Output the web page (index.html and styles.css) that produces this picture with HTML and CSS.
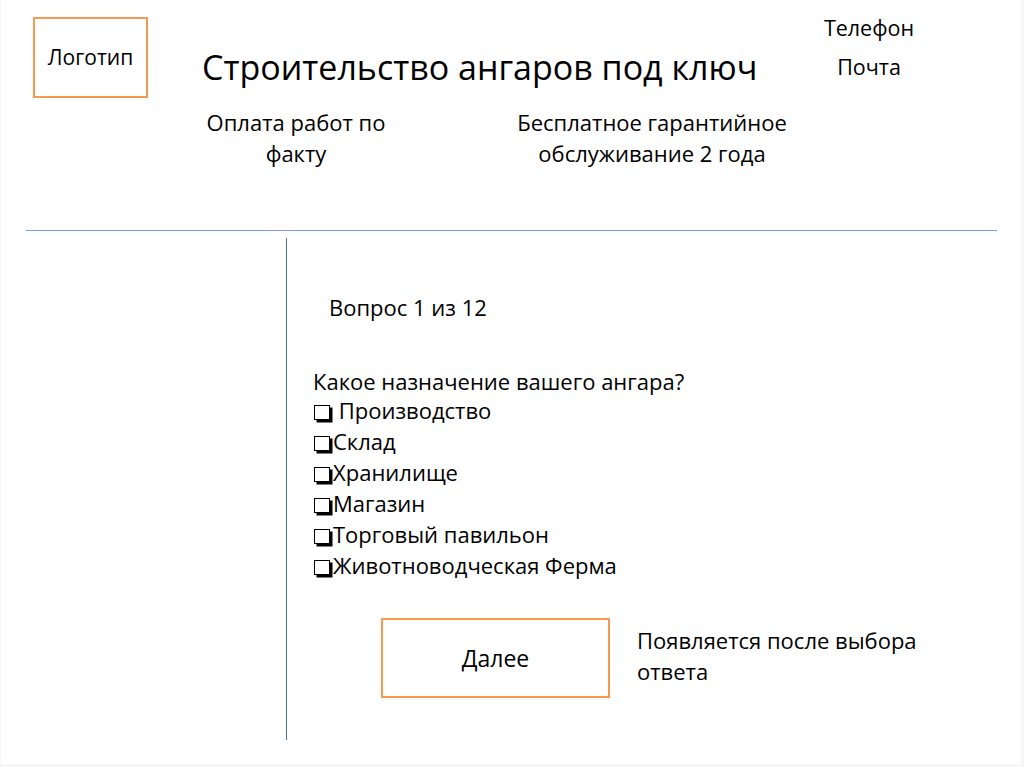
FILE: index.html
```html
<!DOCTYPE html>
<html lang="ru">
<head>
<meta charset="utf-8">
<title>Строительство ангаров под ключ</title>
<link rel="stylesheet" href="styles.css">
</head>
<body>
<div class="slide">
  <header class="top">
    <div class="row1">
      <div class="logo">Логотип</div>
      <h1 class="title">Строительство ангаров под ключ</h1>
      <div class="contacts"><div>Телефон</div><div>Почта</div></div>
    </div>
    <div class="row2">
      <p class="feature f1">Оплата работ по<br>факту</p>
      <p class="feature f2">Бесплатное гарантийное<br>обслуживание 2 года</p>
    </div>
  </header>
  <div class="hline"></div>
  <main class="body">
    <div class="left"></div>
    <section class="quiz">
      <p class="counter">Вопрос 1 из 12</p>
      <p class="question">Какое назначение вашего ангара?</p>
      <ul class="options">
        <li><span class="box"></span> Производство</li>
        <li><span class="box"></span>Склад</li>
        <li><span class="box"></span>Хранилище</li>
        <li><span class="box"></span>Магазин</li>
        <li><span class="box"></span>Торговый павильон</li>
        <li><span class="box"></span>Животноводческая Ферма</li>
      </ul>
      <div class="actions">
        <div class="next">Далее</div>
        <p class="note">Появляется после выбора<br>ответа</p>
      </div>
    </section>
  </main>
</div>
</body>
</html>
```

FILE: styles.css
```css
html, body {
  margin: 0;
  padding: 0;
}
body {
  background: #f6f6f6;
  font-family: "Open Sans", "Noto Sans", sans-serif;
  color: #000;
}
.slide {
  width: 1020px;
  height: 764px;
  margin-left: 1px;
  background: #fff;
  overflow: hidden;
}
.top {
  height: 230px;
}
.row1 {
  display: flex;
  align-items: flex-start;
  padding-left: 32px;
}
.logo {
  margin-top: 17px;
  width: 115px;
  height: 81px;
  box-sizing: border-box;
  border: 2.5px solid #f59a4f;
  display: flex;
  align-items: center;
  justify-content: center;
  font-size: 21px;
  padding-bottom: 2px;
}
.title {
  margin: 47px 0 0 54px;
  width: 607px;
  font-size: 34px;
  font-weight: 400;
  line-height: 40px;
}
.contacts {
  margin-top: 8px;
  width: 120px;
  text-align: center;
  font-size: 21.5px;
  line-height: 39px;
}
.row2 {
  display: flex;
  margin-top: 9px;
  padding-left: 195px;
}
.feature {
  margin: 0;
  text-align: center;
  font-size: 22px;
  line-height: 31px;
}
.f1 {
  width: 200px;
}
.f2 {
  width: 300px;
  margin-left: 106px;
}
.hline {
  height: 1px;
  background: #7f9fd6;
  margin: 0 24px 0 25px;
}
.body {
  display: flex;
  margin-top: 7px;
  height: 502px;
}
.left {
  width: 285px;
  flex: none;
}
.quiz {
  flex: 1;
  border-left: 1.5px solid #4d7298;
  padding-left: 26px;
  padding-top: 54px;
  font-size: 22px;
  line-height: 31px;
}
.counter {
  margin: 0 0 0 16px;
}
.question {
  margin: 43px 0 0 0;
}
.options {
  list-style: none;
  margin: -2px 0 0 0;
  padding: 0;
}
.box {
  display: inline-block;
  width: 14px;
  height: 13px;
  border: 1.5px solid #000;
  box-shadow: 2.5px 2.5px 0 #000;
  margin: 0 3px 0 1px;
  vertical-align: -1px;
}
.actions {
  display: flex;
  align-items: flex-start;
  margin-top: 37px;
}
.next {
  margin-left: 68px;
  width: 229px;
  height: 80px;
  box-sizing: border-box;
  border: 2.5px solid #f59a4f;
  display: flex;
  align-items: center;
  justify-content: center;
  font-size: 23px;
}
.note {
  margin: 7px 0 0 27px;
}
```
